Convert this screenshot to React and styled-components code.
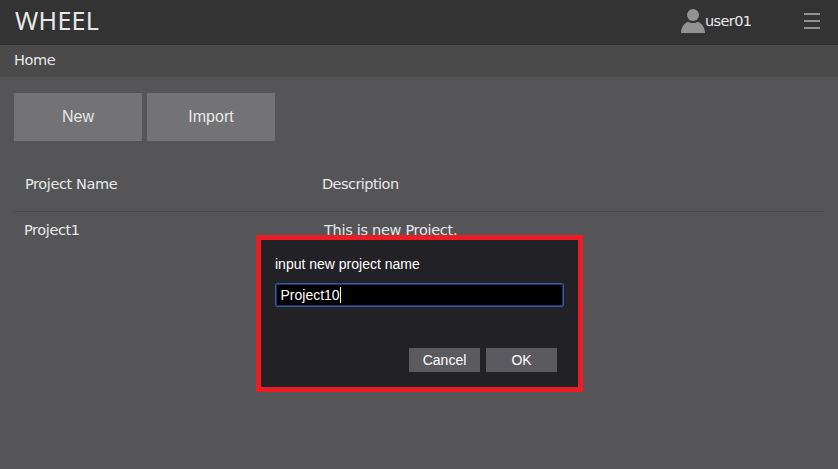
import React from "react";
import styled, { createGlobalStyle } from "styled-components";

const GlobalStyle = createGlobalStyle`
  * { box-sizing: border-box; }
  body {
    margin: 0;
    background: #555557;
    color: #e8e8e8;
    font-family: "DejaVu Sans", sans-serif;
    font-size: 14.5px;
    overflow: hidden;
  }
`;

const Page = styled.div`
  position: relative;
  height: 469px;
  overflow: hidden;
`;

const Header = styled.header`
  display: flex;
  align-items: center;
  height: 45px;
  padding: 0 18px 4px 15px;
  background: #333333;
`;

const Brand = styled.h1`
  flex: 1;
  margin: 0;
  font-family: "Noto Sans", sans-serif;
  font-size: 25px;
  font-weight: 400;
  line-height: 41px;
  letter-spacing: 0.3px;
`;

const User = styled.div`
  display: flex;
  align-items: center;
  width: 123px;
  height: 41px;
`;

const Label = styled.span`
  line-height: 20px;
  white-space: nowrap;
  letter-spacing: ${({ $spacing = -0.4 }) => $spacing}px;
`;

const Breadcrumb = styled.nav`
  display: flex;
  align-items: center;
  height: 32px;
  padding: 0 14px 2px;
  background: #4a4a4b;
`;

const Content = styled.main`
  padding: 16px 14px;
`;

const Toolbar = styled.div`
  display: flex;
  gap: 5px;
`;

const ToolButton = styled.button`
  width: 128px;
  height: 48px;
  padding: 0 0 1px;
  border: 0;
  background: #737375;
  color: #e8e8e8;
  font: 16px "Liberation Sans", Arial, sans-serif;
`;

const TableRow = styled.div`
  display: grid;
  grid-template-columns: 300px 1fr;
  padding-left: 10px;
`;

const TableHead = styled(TableRow)`
  height: 71px;
  padding: 33px 0 0 11px;
  grid-template-columns: 297px 1fr;
  border-bottom: 1px solid #4a4a4b;
`;

const TableItem = styled(TableRow)`
  padding-top: 8px;
`;

const Dialog = styled.section`
  position: absolute;
  top: 235px;
  left: 256px;
  width: 327px;
  height: 157px;
  padding: 14px;
  border: 5px solid #ed1c24;
  background: #222126;
  color: #fff;
  font: 14px/20px "Liberation Sans", Arial, sans-serif;
`;

const Field = styled.div`
  display: flex;
  align-items: center;
  height: 24px;
  margin-top: 9px;
  padding-left: 4.5px;
  border: 1px solid #345a9d;
  border-radius: 2px;
  box-shadow: inset 0 0 0 1px #1d3868;
  background: #000;
`;

const Caret = styled.span`
  width: 1px;
  height: 16px;
  background: #fff;
`;

const Actions = styled.div`
  display: flex;
  justify-content: flex-end;
  gap: 6px;
  margin: 41px 7px 0 0;
`;

const DialogButton = styled.button`
  width: 71px;
  height: 24px;
  padding: 0;
  border: 0;
  background: #5b5a5f;
  color: #fff;
  font: 14px "Liberation Sans", Arial, sans-serif;
`;

const UserIcon = () => (
  <svg width="24" height="24" viewBox="0 0 24 24" fill="#929292">
    <circle cx="12" cy="6" r="6" />
    <path d="M0 24C0 18.500 3 14.200 7 12.700C9.500 14.400 14.500 14.400 17 12.700C21 14.200 24 18.500 24 24z" />
  </svg>
);

const MenuIcon = () => (
  <svg width="16" height="16" viewBox="0 0 16 16" fill="#929292">
    <path d="M0 0h16v2H0zM0 7h16v2H0zM0 14h16v2H0z" />
  </svg>
);

export default function App() {
  return (
    <>
      <GlobalStyle />
      <Page>
        <Header>
          <Brand>WHEEL</Brand>
          <User>
            <UserIcon />
            <Label $spacing={-0.6}>user01</Label>
          </User>
          <MenuIcon />
        </Header>
        <Breadcrumb>
          <Label>Home</Label>
        </Breadcrumb>
        <Content>
          <Toolbar>
            <ToolButton>New</ToolButton>
            <ToolButton>Import</ToolButton>
          </Toolbar>
          <TableHead>
            <Label>Project Name</Label>
            <Label $spacing={-0.55}>Description</Label>
          </TableHead>
          <TableItem>
            <Label>Project1</Label>
            <Label $spacing={-0.3}>This is new Project.</Label>
          </TableItem>
        </Content>
        <Dialog>
          <div>input new project name</div>
          <Field>
            Project10
            <Caret />
          </Field>
          <Actions>
            <DialogButton>Cancel</DialogButton>
            <DialogButton>OK</DialogButton>
          </Actions>
        </Dialog>
      </Page>
    </>
  );
}
